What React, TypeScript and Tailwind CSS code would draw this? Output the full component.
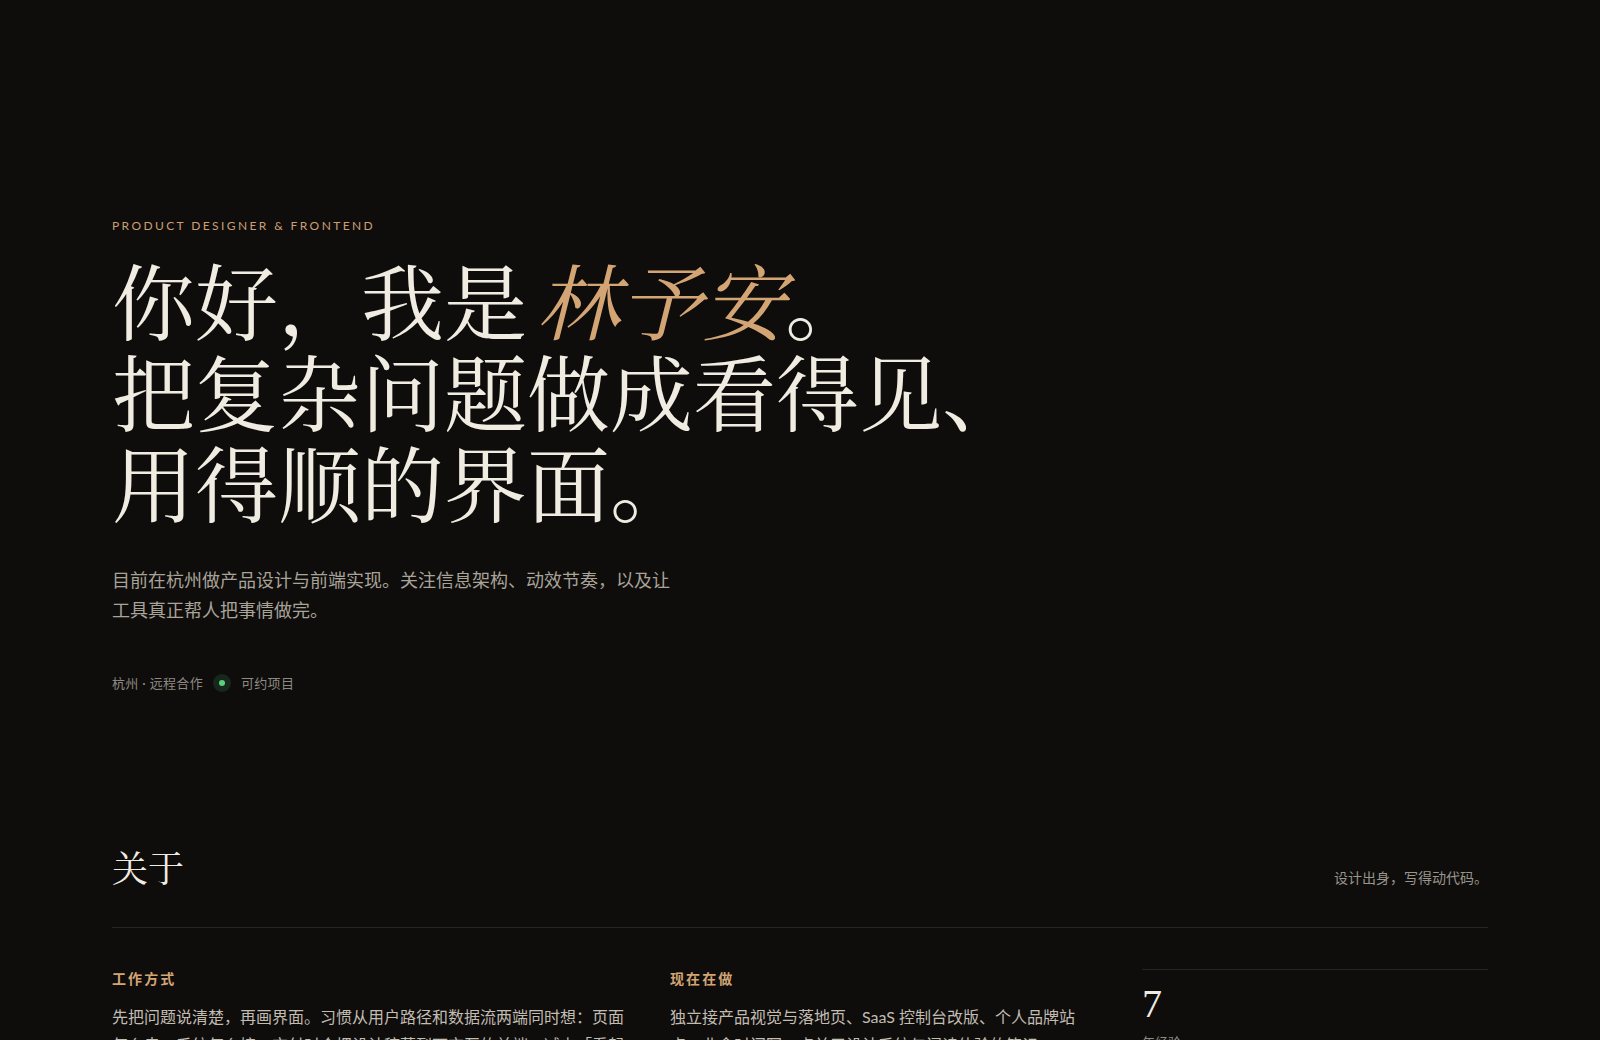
export default function App() {
  return (
    <div className="min-h-screen bg-[#0e0d0c] font-['Lato','Noto_Sans_CJK_SC',sans-serif] text-[#efe9df]">
      <main className="px-28">
        {/* hero */}
        <section className="pt-[218px]">
          <p className="text-[12px] uppercase leading-4 tracking-[0.2em] text-[#cc9f72]">
            Product Designer &amp; Frontend
          </p>
          <h1 className="mt-[19px] font-['Noto_Serif_CJK_SC','Source_Han_Serif_SC','Liberation_Serif',serif] text-[83px] font-normal leading-[91px] text-[#f1ece2]">
            你好，我是 <em className="-ml-3 italic text-[#d4a574]">林予安</em>。
            <br />
            把复杂问题做成看得见、
            <br />
            用得顺的界面。
          </h1>
          <p className="mt-10 max-w-[560px] text-[18px] leading-[1.65] text-[#a9a398]">
            目前在杭州做产品设计与前端实现。关注信息架构、动效节奏，以及让工具真正帮人把事情做完。
          </p>
          <div className="mt-[49px] flex items-center gap-2.5 text-[13px] leading-[18px] tracking-wide text-[#8f8a82]">
            <span>杭州 · 远程合作</span>
            <span className="flex h-[18px] w-[18px] items-center justify-center rounded-full bg-[#18271b]">
              <span className="h-1.5 w-1.5 rounded-full bg-[#5ccf7e]" />
            </span>
            <span>可约项目</span>
          </div>
        </section>

        {/* about */}
        <section className="mt-[153px]">
          <div className="flex items-end justify-between border-b border-[#262422] pb-[39px]">
            <h2 className="font-['Noto_Serif_CJK_SC','Source_Han_Serif_SC','Liberation_Serif',serif] text-[36px] font-normal leading-[43px] text-[#f1ece2]">
              关于
            </h2>
            <p className="text-[14px] leading-5 text-[#9a958c]">设计出身，写得动代码。</p>
          </div>

          <div className="mt-[41px] grid grid-cols-[558px_472px_1fr]">
            <div className="pr-[38px]">
              <h3 className="text-[14px] font-semibold leading-5 tracking-[0.15em] text-[#d4a574]">工作方式</h3>
              <p className="mt-[14px] text-[16px] leading-[28px] text-[#c2bcb1]">
                先把问题说清楚，再画界面。习惯从用户路径和数据流两端同时想：页面怎么走，系统怎么接，交付时会把设计稿落到可交互的前端，减少「看起来对、用起来不对」的落差。
              </p>
            </div>
            <div className="pr-[56px]">
              <h3 className="text-[14px] font-semibold leading-5 tracking-[0.15em] text-[#d4a574]">现在在做</h3>
              <p className="mt-[14px] text-[16px] leading-[28px] text-[#c2bcb1]">
                独立接产品视觉与落地页、SaaS 控制台改版、个人品牌站点，业余时间写一点关于设计系统与阅读体验的笔记。
              </p>
            </div>
            <div>
              <div className="border-t border-[#262422] pt-[14px]">
                <div className="font-['Liberation_Serif',serif] text-[40px] font-light leading-none text-[#f1ece2]">7</div>
                <div className="mt-2 text-[13px] leading-5 text-[#8f8a82]">年经验</div>
              </div>
            </div>
          </div>
        </section>
      </main>
    </div>
  );
}
